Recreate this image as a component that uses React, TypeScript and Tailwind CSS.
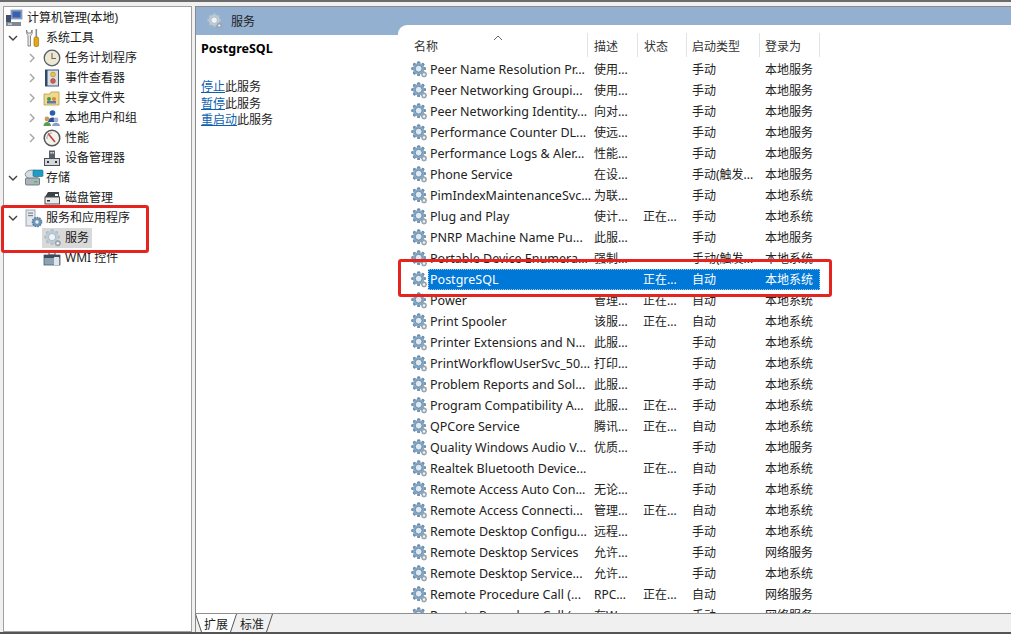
import React from "react";

const FONT = "font-['Noto_Sans','Noto_Sans_CJK_SC',sans-serif]";

type Row = [string, string, string, string, string];
const rows: Row[] = [
  ["Peer Name Resolution Pr...", "使用...", "", "手动", "本地服务"],
  ["Peer Networking Groupi...", "使用...", "", "手动", "本地服务"],
  ["Peer Networking Identity...", "向对...", "", "手动", "本地服务"],
  ["Performance Counter DL...", "使远...", "", "手动", "本地服务"],
  ["Performance Logs & Aler...", "性能...", "", "手动", "本地服务"],
  ["Phone Service", "在设...", "", "手动(触发...", "本地服务"],
  ["PimIndexMaintenanceSvc...", "为联...", "", "手动", "本地系统"],
  ["Plug and Play", "使计...", "正在...", "手动", "本地系统"],
  ["PNRP Machine Name Pu...", "此服...", "", "手动", "本地服务"],
  ["Portable Device Enumera...", "强制...", "", "手动(触发...", "本地系统"],
  ["PostgreSQL", "", "正在...", "自动", "本地系统"],
  ["Power", "管理...", "正在...", "自动", "本地系统"],
  ["Print Spooler", "该服...", "正在...", "自动", "本地系统"],
  ["Printer Extensions and N...", "此服...", "", "手动", "本地系统"],
  ["PrintWorkflowUserSvc_50...", "打印...", "", "手动", "本地系统"],
  ["Problem Reports and Sol...", "此服...", "", "手动", "本地系统"],
  ["Program Compatibility A...", "此服...", "正在...", "手动", "本地系统"],
  ["QPCore Service", "腾讯...", "正在...", "自动", "本地系统"],
  ["Quality Windows Audio V...", "优质...", "", "手动", "本地服务"],
  ["Realtek Bluetooth Device...", "", "正在...", "自动", "本地系统"],
  ["Remote Access Auto Con...", "无论...", "", "手动", "本地系统"],
  ["Remote Access Connecti...", "管理...", "正在...", "自动", "本地系统"],
  ["Remote Desktop Configu...", "远程...", "", "手动", "本地系统"],
  ["Remote Desktop Services", "允许...", "", "手动", "网络服务"],
  ["Remote Desktop Service...", "允许...", "", "手动", "本地系统"],
  ["Remote Procedure Call (...", "RPC...", "正在...", "自动", "网络服务"],
  ["Remote Procedure Call (...", "在W...", "", "手动", "网络服务"],
];

function Gear({ size = 18, light = false }: { size?: number; light?: boolean }) {
  const teeth = [0, 45, 90, 135, 180, 225, 270, 315];
  return (
    <svg width={size} height={size} viewBox="0 0 18 18" className="shrink-0">
      <g>
        {teeth.map((a) => (
          <rect key={a} x="6.6" y="0.4" width="3" height="15.4" rx="1" fill={light ? "#aebfcc" : "#6f90ad"} transform={`rotate(${a} 8.1 8.1)`} />
        ))}
        <circle cx="8.1" cy="8.1" r="6" fill={light ? "#bdcbd6" : "#87a8c3"} />
        <circle cx="8.1" cy="8.1" r="3.6" fill={light ? "#f0f4f7" : "#dfeaf3"} stroke={light ? "#9cafbe" : "#55799a"} strokeWidth="0.8" />
      </g>
      <g>
        {teeth.map((a) => (
          <rect key={a} x="13" y="11.2" width="1.6" height="6" fill="#98a5af" transform={`rotate(${a} 13.8 14.2)`} />
        ))}
        <circle cx="13.8" cy="14.2" r="1.3" fill="#f2f4f6" />
      </g>
    </svg>
  );
}

function Chevron({ open }: { open?: boolean }) {
  return (
    <svg width="10" height="10" viewBox="0 0 10 10" className="shrink-0">
      {open ? (
        <path d="M1 3 L5 7 L9 3" fill="none" stroke="#404040" strokeWidth="1.4" />
      ) : (
        <path d="M3 1 L7 5 L3 9" fill="none" stroke="#a6a6a6" strokeWidth="1.4" />
      )}
    </svg>
  );
}

const TreeIcons: Record<string, React.ReactNode> = {
  computer: (
    <svg width="18" height="18" viewBox="0 0 18 18">
      <rect x="6" y="1" width="11" height="9" fill="#7f9cc6" stroke="#8c9cb0" strokeWidth="0.8" />
      <rect x="7.5" y="2.5" width="8" height="6" fill="#3a5fae" />
      <rect x="1" y="6" width="5" height="7" fill="#3f4f6d" />
      <rect x="1" y="13" width="15" height="4" fill="#7d8a96" />
      <rect x="3" y="14.5" width="4" height="1.2" fill="#dfe5ea" />
    </svg>
  ),
  tools: (
    <svg width="18" height="20" viewBox="0 0 18 20">
      <path d="M2.5 2 C2 6 4 7 4 8 V18 H6.5 V8 C7 7 9 6 8 2 L7 5 H3.5 Z" fill="#e6e9eb" stroke="#6e6e6e" strokeWidth="0.8" />
      <rect x="11.5" y="1" width="1.6" height="8" fill="#8b8b8b" />
      <rect x="10" y="9" width="4.6" height="9.5" rx="1.5" fill="#e3a812" stroke="#8a6508" strokeWidth="0.6" />
    </svg>
  ),
  clock: (
    <svg width="18" height="18" viewBox="0 0 18 18">
      <circle cx="9" cy="9" r="7.8" fill="#eee8d2" stroke="#55606b" strokeWidth="1.3" />
      <path d="M9 4 V9.5 H13" fill="none" stroke="#6f6b5c" strokeWidth="1.1" />
    </svg>
  ),
  event: (
    <svg width="18" height="18" viewBox="0 0 18 18">
      <rect x="2.5" y="1" width="13" height="16" fill="#d8dfe8" stroke="#3e5878" strokeWidth="1" />
      <rect x="2" y="1" width="2.5" height="16" fill="#30496a" />
      <circle cx="10" cy="5.5" r="2.4" fill="#e7c640" stroke="#9b7c1d" strokeWidth="0.5" />
      <circle cx="10" cy="12" r="2.4" fill="#d95b4a" stroke="#8e3227" strokeWidth="0.5" />
    </svg>
  ),
  share: (
    <svg width="18" height="18" viewBox="0 0 18 18">
      <path d="M1 5 H7 L8 3 H16 V16 H1 Z" fill="#f0d98a" stroke="#b59a4d" strokeWidth="0.8" />
      <circle cx="6" cy="10" r="2" fill="#3d9c4a" />
      <circle cx="11" cy="10" r="2" fill="#d98a2d" />
      <rect x="4" y="12" width="9" height="2.5" fill="#5b78b4" />
    </svg>
  ),
  users: (
    <svg width="18" height="18" viewBox="0 0 18 18">
      <circle cx="9.5" cy="4" r="2.8" fill="#2c5fa8" />
      <path d="M5 13 C5 7 14 7 14 13 Z" fill="#2d4e9c" />
      <circle cx="4" cy="10" r="2.4" fill="#c89a55" />
      <path d="M0.5 17 C0.5 11.5 8 11.5 8 17 Z" fill="#5c9a55" />
      <circle cx="13" cy="11" r="2.4" fill="#9fb6d6" />
      <path d="M9 17 C9 12.5 17 12.5 17 17 Z" fill="#8aa0c8" />
    </svg>
  ),
  perf: (
    <svg width="18" height="18" viewBox="0 0 18 18">
      <circle cx="9" cy="9" r="7.8" fill="#f3f3ee" stroke="#565656" strokeWidth="1.5" />
      <path d="M5 4.5 L12 13" stroke="#c5362b" strokeWidth="1.5" />
      <path d="M4 10 A5 5 0 0 1 9 4" fill="none" stroke="#888" strokeWidth="0.8" />
    </svg>
  ),
  device: (
    <svg width="18" height="18" viewBox="0 0 18 18">
      <rect x="6" y="1.5" width="6" height="8" fill="#5a6068" />
      <rect x="7.5" y="3" width="1.2" height="1.6" fill="#fff" />
      <rect x="9.6" y="3" width="1.2" height="1.6" fill="#fff" />
      <rect x="1.5" y="9.5" width="15" height="7" fill="#d5d8db" stroke="#4c4f53" strokeWidth="1" />
      <rect x="4" y="12" width="2" height="2" fill="#333" />
      <rect x="12" y="12" width="2" height="2" fill="#333" />
    </svg>
  ),
  storage: (
    <svg width="20" height="18" viewBox="0 0 20 18">
      <ellipse cx="8" cy="5.5" rx="6.8" ry="4.5" fill="#d6dde2" stroke="#6c7b85" strokeWidth="0.8" />
      <rect x="9" y="1" width="10" height="6.5" rx="1" fill="#1f9bc6" stroke="#1d6b8c" strokeWidth="0.6" />
      <rect x="1.5" y="9" width="14" height="7" rx="1" fill="#aab4bb" stroke="#5f6a72" strokeWidth="0.8" />
      <rect x="10" y="12" width="3.5" height="1.5" fill="#47c05a" />
    </svg>
  ),
  disk: (
    <svg width="18" height="18" viewBox="0 0 18 18">
      <path d="M2 8 L5 3 H16 V8 Z" fill="#3d4247" />
      <rect x="2" y="8" width="14.5" height="7" fill="#e8eaec" stroke="#4a4e52" strokeWidth="1" />
      <rect x="12" y="5" width="3" height="2" fill="#fff" />
      <rect x="4" y="11" width="3" height="1.5" fill="#333" />
    </svg>
  ),
  apps: (
    <svg width="19" height="19" viewBox="0 0 19 19">
      <rect x="2" y="1" width="9" height="16" fill="#e4e8ec" stroke="#8795a3" strokeWidth="0.8" />
      <rect x="4" y="3.5" width="5" height="1.2" fill="#7a8896" />
      <rect x="4" y="6" width="5" height="1.2" fill="#7a8896" />
      <circle cx="13" cy="13" r="4.6" fill="#7097b8" stroke="#56799b" strokeWidth="1.4" strokeDasharray="1.6 1" />
      <circle cx="13" cy="13" r="1.7" fill="#eef3f6" />
    </svg>
  ),
  wmi: (
    <svg width="18" height="18" viewBox="0 0 18 18">
      <rect x="1" y="6" width="16" height="10" fill="#8da3b4" stroke="#4f5f6c" strokeWidth="0.8" />
      <rect x="6" y="3" width="6" height="3" fill="none" stroke="#4f5f6c" strokeWidth="1.2" />
      <rect x="1" y="6" width="16" height="3" fill="#3f4b56" />
      <rect x="11" y="8" width="5" height="8" fill="#dfe5ea" />
    </svg>
  ),
};

function TreeItem({ depth, chevron, icon, label, selected }: { depth: 0 | 1 | 2; chevron?: "open" | "closed"; icon: React.ReactNode; label: string; selected?: boolean }) {
  const indent = depth === 0 ? "pl-[1px]" : depth === 1 ? "pl-[4px]" : "pl-[23px]";
  return (
    <div className={`flex h-5 items-center ${indent}`}>
      {depth > 0 && <span className="flex w-[16px] shrink-0 items-center">{chevron && <Chevron open={chevron === "open"} />}</span>}
      {selected ? (
        <span className="-ml-[1px] flex h-5 w-[50px] items-center bg-[#d9d9d9] pl-[2px]">
          <span className="flex w-[21px] shrink-0 items-center">{icon}</span>
          <span className="text-[12px] text-[#1a1a1a]">{label}</span>
        </span>
      ) : (
        <>
          <span className="flex w-[22px] shrink-0 items-center">{icon}</span>
          <span className="whitespace-nowrap text-[12px] text-[#1a1a1a]">{label}</span>
        </>
      )}
    </div>
  );
}

function ListRow({ row }: { row: Row }) {
  const sel = row[0] === "PostgreSQL";
  return (
    <div className={`flex h-[21px] items-center pl-[13px] text-[12px] ${sel ? "text-white" : "text-[#222]"}`}>
      <span className="flex w-[17px] shrink-0 items-center"><Gear size={17} /></span>
      <div className={`flex h-[21px] w-[392px] items-center ${sel ? "bg-[#0078d7] outline-1 -outline-offset-1 outline-dotted outline-[#9cc6ea]" : ""}`}>
        <span className="w-[166px] shrink-0 overflow-hidden whitespace-nowrap pl-[2px] pt-[2px] text-[12.5px]">{row[0]}</span>
        <span className="w-[49px] shrink-0 whitespace-nowrap">{row[1]}</span>
        <span className="w-[49px] shrink-0 whitespace-nowrap">{row[2]}</span>
        <span className="w-[73px] shrink-0 whitespace-nowrap">{row[3]}</span>
        <span className="whitespace-nowrap">{row[4]}</span>
      </div>
    </div>
  );
}

function Head({ label, className }: { label: string; className: string }) {
  return (
    <div className={`flex h-[24px] shrink-0 items-center border-r border-[#e3e3e3] pt-[4px] text-[12px] text-[#333] ${className}`}>{label}</div>
  );
}

export default function App() {
  return (
    <div className={`${FONT} relative flex h-[634px] w-[1011px] flex-col overflow-hidden bg-[#f0f0f0]`}>
      <div className="h-[2px] bg-[#6b6b6b]" />
      <div className="flex min-h-0 flex-1 gap-[3px] pl-[3px] pt-[4px]">
        <div className="w-[189px] shrink-0 border border-[#a0a0a0] bg-white pt-[1px]">
          <TreeItem depth={0} icon={TreeIcons.computer} label="计算机管理(本地)" />
          <TreeItem depth={1} chevron="open" icon={TreeIcons.tools} label="系统工具" />
          <TreeItem depth={2} chevron="closed" icon={TreeIcons.clock} label="任务计划程序" />
          <TreeItem depth={2} chevron="closed" icon={TreeIcons.event} label="事件查看器" />
          <TreeItem depth={2} chevron="closed" icon={TreeIcons.share} label="共享文件夹" />
          <TreeItem depth={2} chevron="closed" icon={TreeIcons.users} label="本地用户和组" />
          <TreeItem depth={2} chevron="closed" icon={TreeIcons.perf} label="性能" />
          <TreeItem depth={2} icon={TreeIcons.device} label="设备管理器" />
          <TreeItem depth={1} chevron="open" icon={TreeIcons.storage} label="存储" />
          <TreeItem depth={2} icon={TreeIcons.disk} label="磁盘管理" />
          <TreeItem depth={1} chevron="open" icon={TreeIcons.apps} label="服务和应用程序" />
          <TreeItem depth={2} icon={<Gear size={18} light />} label="服务" selected />
          <TreeItem depth={2} icon={TreeIcons.wmi} label="WMI 控件" />
        </div>

        <div className="flex min-w-0 flex-1 flex-col border-l border-t border-[#8a8a8a] bg-white">
          <div className="flex h-[28px] shrink-0 items-center gap-[8px] bg-[#93b0d0] pl-[11px] text-[12px] text-[#222]">
            <Gear size={16} light />
            <span className="pt-[1px]">服务</span>
          </div>
          <div className="flex min-h-0 flex-1">
            <div className="w-[202px] shrink-0 pl-[5px] pt-[5px] text-[12px]">
              <div className="text-[12.5px] font-bold leading-[18px] text-black">PostgreSQL</div>
              <div className="mt-[21px] leading-[16.5px] text-[#222]">
                <div><span className="text-[#0d5fb0] underline">停止</span>此服务</div>
                <div><span className="text-[#0d5fb0] underline">暂停</span>此服务</div>
                <div><span className="text-[#0d5fb0] underline">重启动</span>此服务</div>
              </div>
            </div>
            <div className="-mt-[10px] min-w-0 flex-1 overflow-hidden rounded-tl-[9px] bg-white">
              <div className="relative flex h-[34px] items-end pb-[2px] pl-[12px]">
                <svg width="10" height="6" viewBox="0 0 10 6" className="absolute left-[95px] top-[10px]">
                  <path d="M1 5 L5 1 L9 5" fill="none" stroke="#666" strokeWidth="1" />
                </svg>
                <Head label="名称" className="w-[178px] pl-[4px]" />
                <Head label="描述" className="w-[50px] pl-[6px]" />
                <Head label="状态" className="w-[49px] pl-[6px]" />
                <Head label="启动类型" className="w-[73px] pl-[5px]" />
                <Head label="登录为" className="w-[60px] pl-[5px]" />
              </div>
              <div>
                {rows.map((r, i) => <ListRow key={i} row={r} />)}
              </div>
            </div>
          </div>
          <div className="flex h-[19px] shrink-0 items-stretch border-t border-[#8f8f8f] bg-[#f0f0f0] text-[12px] text-[#222]">
            <svg width="7" height="18" viewBox="0 0 7 18" className="-ml-[1px] shrink-0">
              <path d="M0 0 L6.5 18 L7 18 L7 0 Z" fill="#fff" />
              <path d="M0.5 0 L6.5 18" fill="none" stroke="#555" strokeWidth="1" />
            </svg>
            <div className="flex items-center bg-white pl-[2px] pr-[2px] pt-[3px]">扩展</div>
            <svg width="7" height="18" viewBox="0 0 7 18" className="shrink-0">
              <path d="M0 0 L7 0 L0.5 18 L0 18 Z" fill="#fff" />
              <path d="M6.5 0 L0.5 18" fill="none" stroke="#555" strokeWidth="1" />
            </svg>
            <div className="flex items-center pl-[3px] pr-[2px] pt-[3px]">标准</div>
            <svg width="7" height="18" viewBox="0 0 7 18" className="shrink-0">
              <path d="M6.5 0 L0.5 18" fill="none" stroke="#555" strokeWidth="1" />
            </svg>
          </div>
        </div>
      </div>
      <div className="h-[2px] bg-[#555]" />

      <div className="pointer-events-none absolute left-[1px] top-[205px] h-[48px] w-[148px] rounded-[3px] border-[3px] border-[#e52420]" />
      <div className="pointer-events-none absolute left-[398px] top-[259px] h-[38px] w-[434px] rounded-[3px] border-[3px] border-[#e52420]" />
    </div>
  );
}
